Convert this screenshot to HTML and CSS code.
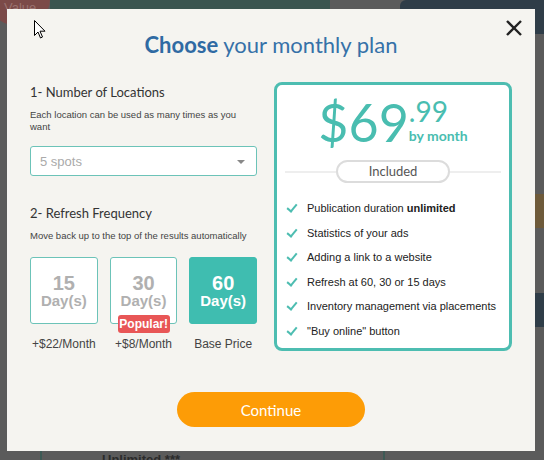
FILE: index.html
```html
<!DOCTYPE html>
<html lang="en">
<head>
    <meta charset="UTF-8">
    <meta name="viewport" content="width=device-width, initial-scale=1.0">
    <title>Choose your monthly plan</title>
    <link rel="stylesheet" href="styles.css">
</head>
<body>
    <!-- page behind the dialog, dimmed -->
    <div class="backdrop">
        <div class="bg-badge">Value</div>
        <div class="bg-topbar"></div>
        <div class="bg-navy"></div>
        <div class="bg-gold"></div>
        <div class="bg-navy2"></div>
        <div class="bg-bottom">Unlimited ***</div>
    </div>

    <div class="modal">
        <button class="close" aria-label="Close">
            <svg width="16" height="16" viewBox="0 0 16 16"><path d="M1 1 L15 15 M15 1 L1 15" stroke="#222" stroke-width="2.4" fill="none"/></svg>
        </button>

        <h1 class="title"><strong>Choose</strong> your monthly plan</h1>

        <div class="columns">
            <div class="options">
                <h2>1- Number of Locations</h2>
                <p class="hint">Each location can be used as many times as you want</p>
                <div class="select">
                    <span>5 spots</span>
                    <i class="caret"></i>
                </div>

                <h2 class="second">2- Refresh Frequency</h2>
                <p class="hint">Move back up to the top of the results automatically</p>

                <div class="days">
                    <div class="day">
                        <div class="day-box"><b>15</b><span>Day(s)</span></div>
                        <div class="day-price">+$22/Month</div>
                    </div>
                    <div class="day">
                        <div class="day-box"><b>30</b><span>Day(s)</span><em class="popular">Popular!</em></div>
                        <div class="day-price">+$8/Month</div>
                    </div>
                    <div class="day">
                        <div class="day-box active"><b>60</b><span>Day(s)</span></div>
                        <div class="day-price">Base Price</div>
                    </div>
                </div>
            </div>

            <div class="plan">
                <div class="price">
                    <span class="amount">$69</span>
                    <span class="cents-wrap"><span class="cents">.99</span><span class="per">by month</span></span>
                </div>
                <div class="included"><span>Included</span></div>
                <ul class="features">
                    <li>Publication duration <b>unlimited</b></li>
                    <li>Statistics of your ads</li>
                    <li>Adding a link to a website</li>
                    <li>Refresh at 60, 30 or 15 days</li>
                    <li>Inventory management via placements</li>
                    <li>"Buy online" button</li>
                </ul>
            </div>
        </div>

        <div class="actions">
            <button class="continue">Continue</button>
        </div>
    </div>

    <svg class="cursor" width="12" height="19" viewBox="0 0 12 19"><path d="M0.5 0.5 L0.5 15.5 L4 12 L6.5 18 L8.5 17 L6 11.2 L11 11.2 Z" fill="#fff" stroke="#000" stroke-width="1"/></svg>
</body>
</html>
```

FILE: styles.css
```css
body {
    margin: 0;
    width: 544px;
    height: 460px;
    overflow: hidden;
    background: #5b5b5b;
    font-family: "Liberation Sans", Arial, sans-serif;
    position: relative;
}

/* dimmed page behind the dialog */
.backdrop {
    position: absolute;
    inset: 0;
}
.bg-badge {
    position: absolute;
    left: -12px;
    top: -26px;
    width: 62px;
    height: 52px;
    border-radius: 50%;
    background: #7b4a48;
    color: #9a7270;
    font-size: 13px;
    padding: 26px 0 0 16px;
    box-sizing: border-box;
}
.bg-topbar {
    position: absolute;
    left: 50px;
    top: 0;
    width: 280px;
    height: 9px;
    background: #3b5550;
}
.bg-navy {
    position: absolute;
    left: 400px;
    top: 0;
    width: 144px;
    height: 34px;
    border-radius: 6px 0 0 0;
    background: #2f3d48;
}
.bg-gold {
    position: absolute;
    right: 0;
    top: 194px;
    width: 9px;
    height: 34px;
    background: #6e5a3a;
}
.bg-navy2 {
    position: absolute;
    right: 0;
    top: 293px;
    width: 9px;
    height: 34px;
    background: #2f3d48;
}
.bg-bottom {
    position: absolute;
    left: 40px;
    top: 451px;
    width: 345px;
    height: 9px;
    border-left: 2px solid #3e5a55;
    border-right: 2px solid #3e5a55;
    color: #2b2b2b;
    font-size: 13px;
    font-weight: bold;
    line-height: 18px;
    padding-left: 60px;
    box-sizing: border-box;
    overflow: hidden;
}

.modal {
    position: absolute;
    left: 7px;
    top: 9px;
    width: 528px;
    height: 442px;
    box-sizing: border-box;
    padding: 21px 23px 0;
    background: #f5f4f0;
}

.close {
    position: absolute;
    right: 13px;
    top: 11px;
    padding: 0;
    border: none;
    background: none;
    cursor: pointer;
}

.title {
    margin: 0 0 22px;
    text-align: center;
    font-family: Lato, "Open Sans", sans-serif;
    font-size: 22px;
    font-weight: normal;
    line-height: 30px;
    color: #3571a8;
}
.title strong {
    font-weight: bold;
    color: #2f6aa3;
}

.columns {
    display: flex;
    align-items: flex-start;
    gap: 17px;
    height: 269px;
}

.options {
    width: 227px;
}
.options h2 {
    margin: 1px 0 0;
    font-family: Lato, "Open Sans", sans-serif;
    font-size: 13px;
    font-weight: normal;
    line-height: 18px;
    color: #333;
}
.options h2.second {
    margin-top: 28px;
}
.hint {
    margin: 8px 0 0;
    font-size: 9.5px;
    line-height: 12px;
    color: #444;
}

.select {
    margin-top: 13px;
    height: 30px;
    border: 1px solid #6cc3b8;
    border-radius: 3px;
    background: #fff;
    display: flex;
    align-items: center;
    justify-content: space-between;
    padding: 0 11px 0 9px;
    box-sizing: border-box;
    font-size: 13px;
    color: #aaa;
}
.caret {
    width: 0;
    height: 0;
    border-left: 4px solid transparent;
    border-right: 4px solid transparent;
    border-top: 4px solid #888;
    margin-top: 2px;
}

.days {
    display: flex;
    gap: 12px;
    margin-top: 15px;
}
.day {
    width: 68px;
    text-align: center;
}
.day-box {
    position: relative;
    height: 67px;
    box-sizing: border-box;
    border: 1px solid #6cc3b8;
    border-radius: 3px;
    background: #fff;
    color: #b0b0b0;
    display: flex;
    flex-direction: column;
    align-items: center;
    justify-content: center;
    font-weight: bold;
}
.day-box b {
    font-size: 20px;
    line-height: 20px;
}
.day-box span {
    font-size: 15px;
    line-height: 15px;
}
.day-box.active {
    background: #3fbdb0;
    border-color: #3fbdb0;
    color: #fff;
}
.popular {
    position: absolute;
    left: 7px;
    top: 57px;
    width: 52px;
    height: 18px;
    border-radius: 3px;
    background: #e85656;
    color: #fff;
    font-style: normal;
    font-size: 12px;
    line-height: 18px;
}
.day-price {
    margin-top: 13px;
    font-size: 12px;
    color: #444;
}

.plan {
    width: 238px;
    height: 269px;
    box-sizing: border-box;
    border: 3px solid #4dbdb1;
    border-radius: 8px;
    background: #fff;
    padding: 0 8px;
}
.price {
    display: flex;
    justify-content: center;
    align-items: flex-start;
    color: #49bdb0;
    font-family: Lato, "Open Sans", sans-serif;
    height: 75px;
}
.amount {
    font-size: 52px;
    line-height: 52px;
    margin-top: 11px;
}
.cents-wrap {
    display: flex;
    flex-direction: column;
    margin-top: 13px;
}
.cents {
    font-size: 28px;
    line-height: 26px;
}
.per {
    font-size: 14px;
    font-weight: bold;
    line-height: 14px;
    margin-top: 5px;
}

.included {
    position: relative;
    height: 23px;
    display: flex;
    justify-content: center;
}
.included::before {
    content: "";
    position: absolute;
    left: 0;
    right: 0;
    top: 11px;
    height: 2px;
    background: #eeeeee;
}
.included span {
    position: relative;
    width: 114px;
    box-sizing: border-box;
    border: 2px solid #dcdcdc;
    border-radius: 12px;
    background: #fff;
    text-align: center;
    font-family: Lato, "Open Sans", sans-serif;
    font-size: 13px;
    line-height: 19px;
    color: #555;
}

.features {
    list-style: none;
    margin: 18px 0 0;
    padding: 0 0 0 22px;
}
.features li {
    position: relative;
    font-size: 11px;
    line-height: 14px;
    height: 24.5px;
    color: #222;
    white-space: nowrap;
}
.features li::before {
    content: "";
    position: absolute;
    left: -18px;
    top: 1px;
    width: 4px;
    height: 8px;
    border-right: 2.5px solid #4dbdb1;
    border-bottom: 2.5px solid #4dbdb1;
    transform: rotate(40deg);
}

.actions {
    display: flex;
    justify-content: center;
    margin-top: 41px;
}
.continue {
    width: 188px;
    height: 35px;
    border: none;
    border-radius: 18px;
    background: #fd9c06;
    color: #fff;
    font-family: Lato, "Open Sans", sans-serif;
    font-size: 15px;
    cursor: pointer;
}

.cursor {
    position: absolute;
    left: 34px;
    top: 20px;
}
```
